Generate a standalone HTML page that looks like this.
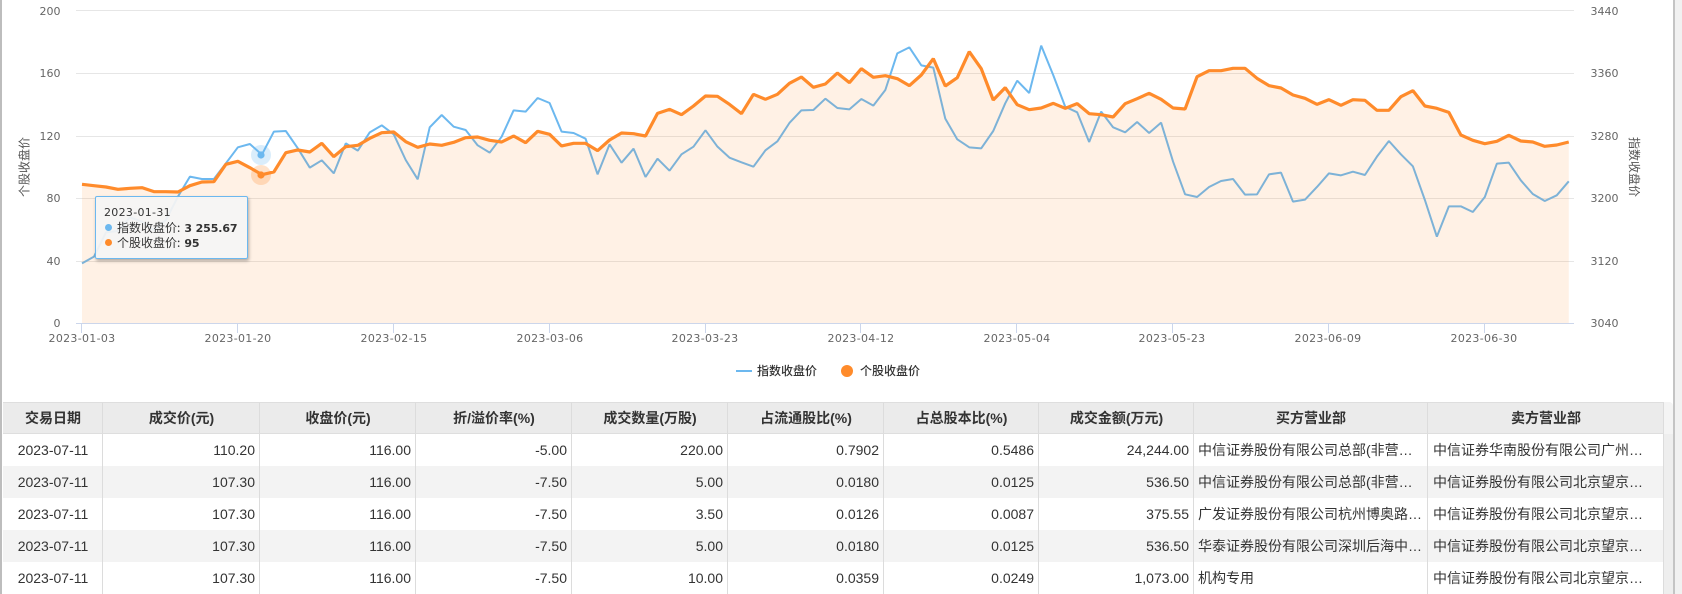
<!DOCTYPE html>
<html lang="zh">
<head>
<meta charset="utf-8">
<title>收盘价走势</title>
<style>
html,body{margin:0;padding:0;background:#fff}
body{position:relative;width:1682px;height:594px;overflow:hidden;font-family:"Liberation Sans","Noto Sans CJK SC",sans-serif;color:#333}
.lb{position:absolute;left:0;top:0;width:2px;height:594px;background:#bdbdbd}
.rb{position:absolute;left:1673px;top:0;width:2px;height:594px;background:#c4c4c4}
.rs{position:absolute;left:1675px;top:0;width:7px;height:594px;background:#f1f1f1}
svg{position:absolute;left:0;top:0}
svg text{font-family:"DejaVu Sans","Noto Sans CJK SC",sans-serif;font-size:11px;fill:#666}
svg text.d{letter-spacing:.3px}
svg text.c{font-family:"Noto Sans CJK SC",sans-serif;font-size:12px;fill:#555}
svg text.l{font-family:"Noto Sans CJK SC",sans-serif;font-size:12px;fill:#333;font-weight:500}
table{position:absolute;left:3px;top:402px;border-collapse:separate;border-spacing:0;table-layout:fixed;width:1661px;font-size:14px}
th,td{box-sizing:border-box;height:32px;padding:0 4px 0 5px;border-right:1px solid #dcdcdc;white-space:nowrap;overflow:hidden;text-align:right}
th{background:#ebebeb;border-top:1px solid #dedede;border-bottom:1px solid #dedede;text-align:center;font-weight:bold;color:#333}
td{color:#333}
tr.e td{background:#f3f3f3}
td.c{text-align:center}
td.t{text-align:left}
td.b{padding-left:4px}
.gh{position:absolute;left:1664px;top:402px;width:9px;height:32px;background:#f4f4f4;border-top-right-radius:4px}
.gb{position:absolute;left:1664px;top:434px;width:9px;height:160px;background:#eeeeee}
.tip{position:absolute;left:95px;top:196px;width:153px;height:63px;box-sizing:border-box;background:rgba(245,245,245,.92);border:1px solid #6cb8ef;border-radius:2px;box-shadow:1px 2px 3px rgba(0,0,0,.3);font-family:"Noto Sans CJK SC",sans-serif;font-size:12px;color:#333;line-height:15px}
.tip div{position:absolute;left:21px;white-space:nowrap}
.tip .dt{left:8px;top:8px;font-family:"DejaVu Sans",sans-serif;font-size:11px;letter-spacing:.3px}
.tip i{position:absolute;width:7px;height:7px;border-radius:50%;left:8.5px}
.tip b{font-family:"DejaVu Sans",sans-serif;font-size:11px;font-weight:bold;margin-left:4px;letter-spacing:-.1px}
.tip i.a{background:#6cb8ef}
.tip i.o{background:#ff8b2b}
</style>
</head>
<body>
<div class="lb"></div>
<div class="rb"></div>
<div class="rs"></div>
<svg width="1682" height="400" viewBox="0 0 1682 400">
  <g stroke="#e6e6e6" stroke-width="1">
    <line x1="76" x2="1574" y1="10.5" y2="10.5"/>
    <line x1="76" x2="1574" y1="73.5" y2="73.5"/>
    <line x1="76" x2="1574" y1="136.5" y2="136.5"/>
    <line x1="76" x2="1574" y1="198.5" y2="198.5"/>
    <line x1="76" x2="1574" y1="261.5" y2="261.5"/>
  </g>
  <g transform="translate(82 0) scale(11.99 .33333)" fill="none">
    <polyline vector-effect="non-scaling-stroke" stroke="#6cb8ef" stroke-width="2" stroke-linejoin="bevel" points="0,790 1,770 2,697 3,693 4,652 5,665 6,690 7,660 8,590 9,530 10,537 11,537 12,490 13,442 14,432 15,464 16,395 17,393 18,445 19,503 20,481 21,520 22,430 23,452 24,397 25,376 26,403 27,480 28,538 29,382 30,345 31,380 32,390 33,436 34,458 35,410 36,331 37,335 38,294 39,309 40,395 41,399 42,416 43,523 44,433 45,488 46,446 47,531 48,476 49,512 50,463 51,440 52,391 53,440 54,473 55,487 56,500 57,451 58,424 59,369 60,331 61,330 62,296 63,324 64,328 65,297 66,317 67,270 68,160 69,142 70,196 71,203 72,356 73,418 74,442 75,445 76,393 77,310 78,242 79,279 80,137 81,225 82,320 83,337 84,426 85,335 86,382 87,397 88,366 89,399 90,368 91,485 92,583 93,591 94,561 95,543 96,537 97,584 98,583 99,523 100,518 101,605 102,599 103,561 104,520 105,526 106,515 107,525 108,470 109,423 110,463 111,499 112,600 113,710 114,619 115,619 116,636 117,591 118,491 119,488 120,541 121,582 122,603 123,586 124,544"/>
    <polygon fill="#ff8b2b" fill-opacity=".12" points="0,553 1,557 2,561 3,568 4,565 5,563 6,575 7,575 8,576 9,557 10,546 11,545 12,493 13,484 14,503 15,524 16,516 17,458 18,450 19,456 20,430 21,470 22,440 23,436 24,415 25,398 26,396 27,425 28,442 29,432 30,436 31,427 32,413 33,411 34,421 35,426 36,408 37,428 38,394 39,403 40,438 41,430 42,430 43,452 44,420 45,399 46,401 47,408 48,340 49,328 50,344 51,318 52,288 53,289 54,313 55,341 56,283 57,298 58,283 59,250 60,231 61,262 62,252 63,219 64,248 65,206 66,232 67,227 68,236 69,257 70,225 71,176 72,258 73,233 74,155 75,206 76,300 77,263 78,314 79,329 80,324 81,310 82,325 83,311 84,341 85,344 86,351 87,311 88,296 89,280 90,298 91,324 92,327 93,230 94,212 95,212 96,205 97,205 98,235 99,257 100,264 101,285 102,295 103,313 104,299 105,316 106,299 107,301 108,331 109,331 110,290 111,272 112,318 113,325 114,337 115,405 116,421 117,431 118,424 119,406 120,423 121,426 122,439 123,435 124,426 124,969 0,969"/>
    <polyline vector-effect="non-scaling-stroke" stroke="#ff8b2b" stroke-width="3.2" stroke-linejoin="bevel" points="0,553 1,557 2,561 3,568 4,565 5,563 6,575 7,575 8,576 9,557 10,546 11,545 12,493 13,484 14,503 15,524 16,516 17,458 18,450 19,456 20,430 21,470 22,440 23,436 24,415 25,398 26,396 27,425 28,442 29,432 30,436 31,427 32,413 33,411 34,421 35,426 36,408 37,428 38,394 39,403 40,438 41,430 42,430 43,452 44,420 45,399 46,401 47,408 48,340 49,328 50,344 51,318 52,288 53,289 54,313 55,341 56,283 57,298 58,283 59,250 60,231 61,262 62,252 63,219 64,248 65,206 66,232 67,227 68,236 69,257 70,225 71,176 72,258 73,233 74,155 75,206 76,300 77,263 78,314 79,329 80,324 81,310 82,325 83,311 84,341 85,344 86,351 87,311 88,296 89,280 90,298 91,324 92,327 93,230 94,212 95,212 96,205 97,205 98,235 99,257 100,264 101,285 102,295 103,313 104,299 105,316 106,299 107,301 108,331 109,331 110,290 111,272 112,318 113,325 114,337 115,405 116,421 117,431 118,424 119,406 120,423 121,426 122,439 123,435 124,426"/>
  </g>
  <line x1="76" x2="1574" y1="323.5" y2="323.5" stroke="#ccd6eb"/>
  <g stroke="#ccd6eb">
    <line x1="81.5" x2="81.5" y1="323" y2="333"/>
    <line x1="237.5" x2="237.5" y1="323" y2="333"/>
    <line x1="393.5" x2="393.5" y1="323" y2="333"/>
    <line x1="549.5" x2="549.5" y1="323" y2="333"/>
    <line x1="705.5" x2="705.5" y1="323" y2="333"/>
    <line x1="860.5" x2="860.5" y1="323" y2="333"/>
    <line x1="1016.5" x2="1016.5" y1="323" y2="333"/>
    <line x1="1172.5" x2="1172.5" y1="323" y2="333"/>
    <line x1="1328.5" x2="1328.5" y1="323" y2="333"/>
    <line x1="1484.5" x2="1484.5" y1="323" y2="333"/>
  </g>
  <circle cx="261" cy="155" r="10" fill="#6cb8ef" fill-opacity=".25"/>
  <circle cx="261" cy="155" r="3.6" fill="#6cb8ef"/>
  <circle cx="261" cy="175" r="10" fill="#ff8b2b" fill-opacity=".25"/>
  <circle cx="261" cy="175" r="3.6" fill="#ff8b2b"/>
  <g text-anchor="end">
    <text x="60.5" y="15">200</text>
    <text x="60.5" y="77">160</text>
    <text x="60.5" y="140">120</text>
    <text x="60.5" y="202">80</text>
    <text x="60.5" y="265">40</text>
    <text x="60.5" y="327">0</text>
  </g>
  <g>
    <text x="1590.5" y="15">3440</text>
    <text x="1590.5" y="77">3360</text>
    <text x="1590.5" y="140">3280</text>
    <text x="1590.5" y="202">3200</text>
    <text x="1590.5" y="265">3120</text>
    <text x="1590.5" y="327">3040</text>
  </g>
  <g text-anchor="middle">
    <text class="d" x="82" y="342">2023-01-03</text>
    <text class="d" x="238" y="342">2023-01-20</text>
    <text class="d" x="394" y="342">2023-02-15</text>
    <text class="d" x="550" y="342">2023-03-06</text>
    <text class="d" x="705" y="342">2023-03-23</text>
    <text class="d" x="861" y="342">2023-04-12</text>
    <text class="d" x="1017" y="342">2023-05-04</text>
    <text class="d" x="1172" y="342">2023-05-23</text>
    <text class="d" x="1328" y="342">2023-06-09</text>
    <text class="d" x="1484" y="342">2023-06-30</text>
  </g>
  <text class="c" text-anchor="middle" transform="translate(28.5 167) rotate(-90)">个股收盘价</text>
  <text class="c" text-anchor="middle" transform="translate(1630 167) rotate(90)">指数收盘价</text>
  <line x1="736" x2="752" y1="371" y2="371" stroke="#6cb8ef" stroke-width="2"/>
  <text class="l" x="757" y="375">指数收盘价</text>
  <circle cx="847" cy="371" r="6" fill="#ff8b2b"/>
  <text class="l" x="860" y="375">个股收盘价</text>
</svg>
<div class="tip">
  <div class="dt">2023-01-31</div>
  <i class="a" style="top:26.5px"></i>
  <div style="top:22.5px">指数收盘价:<b>3 255.67</b></div>
  <i class="o" style="top:41.5px"></i>
  <div style="top:38px">个股收盘价:<b>95</b></div>
</div>
<div class="gh"></div>
<div class="gb"></div>
<table>
  <colgroup>
    <col style="width:100px"><col style="width:157px"><col style="width:156px"><col style="width:156px"><col style="width:156px"><col style="width:156px"><col style="width:155px"><col style="width:155px"><col style="width:234px"><col style="width:236px">
  </colgroup>
  <thead>
    <tr><th>交易日期</th><th>成交价(元)</th><th>收盘价(元)</th><th>折/溢价率(%)</th><th>成交数量(万股)</th><th>占流通股比(%)</th><th>占总股本比(%)</th><th>成交金额(万元)</th><th>买方营业部</th><th>卖方营业部</th></tr>
  </thead>
  <tbody>
    <tr><td class="c">2023-07-11</td><td>110.20</td><td>116.00</td><td>-5.00</td><td>220.00</td><td>0.7902</td><td>0.5486</td><td>24,244.00</td><td class="t b">中信证券股份有限公司总部(非营…</td><td class="t">中信证券华南股份有限公司广州…</td></tr>
    <tr class="e"><td class="c">2023-07-11</td><td>107.30</td><td>116.00</td><td>-7.50</td><td>5.00</td><td>0.0180</td><td>0.0125</td><td>536.50</td><td class="t b">中信证券股份有限公司总部(非营…</td><td class="t">中信证券股份有限公司北京望京…</td></tr>
    <tr><td class="c">2023-07-11</td><td>107.30</td><td>116.00</td><td>-7.50</td><td>3.50</td><td>0.0126</td><td>0.0087</td><td>375.55</td><td class="t b">广发证券股份有限公司杭州博奥路…</td><td class="t">中信证券股份有限公司北京望京…</td></tr>
    <tr class="e"><td class="c">2023-07-11</td><td>107.30</td><td>116.00</td><td>-7.50</td><td>5.00</td><td>0.0180</td><td>0.0125</td><td>536.50</td><td class="t b">华泰证券股份有限公司深圳后海中…</td><td class="t">中信证券股份有限公司北京望京…</td></tr>
    <tr><td class="c">2023-07-11</td><td>107.30</td><td>116.00</td><td>-7.50</td><td>10.00</td><td>0.0359</td><td>0.0249</td><td>1,073.00</td><td class="t b">机构专用</td><td class="t">中信证券股份有限公司北京望京…</td></tr>
  </tbody>
</table>
</body>
</html>
